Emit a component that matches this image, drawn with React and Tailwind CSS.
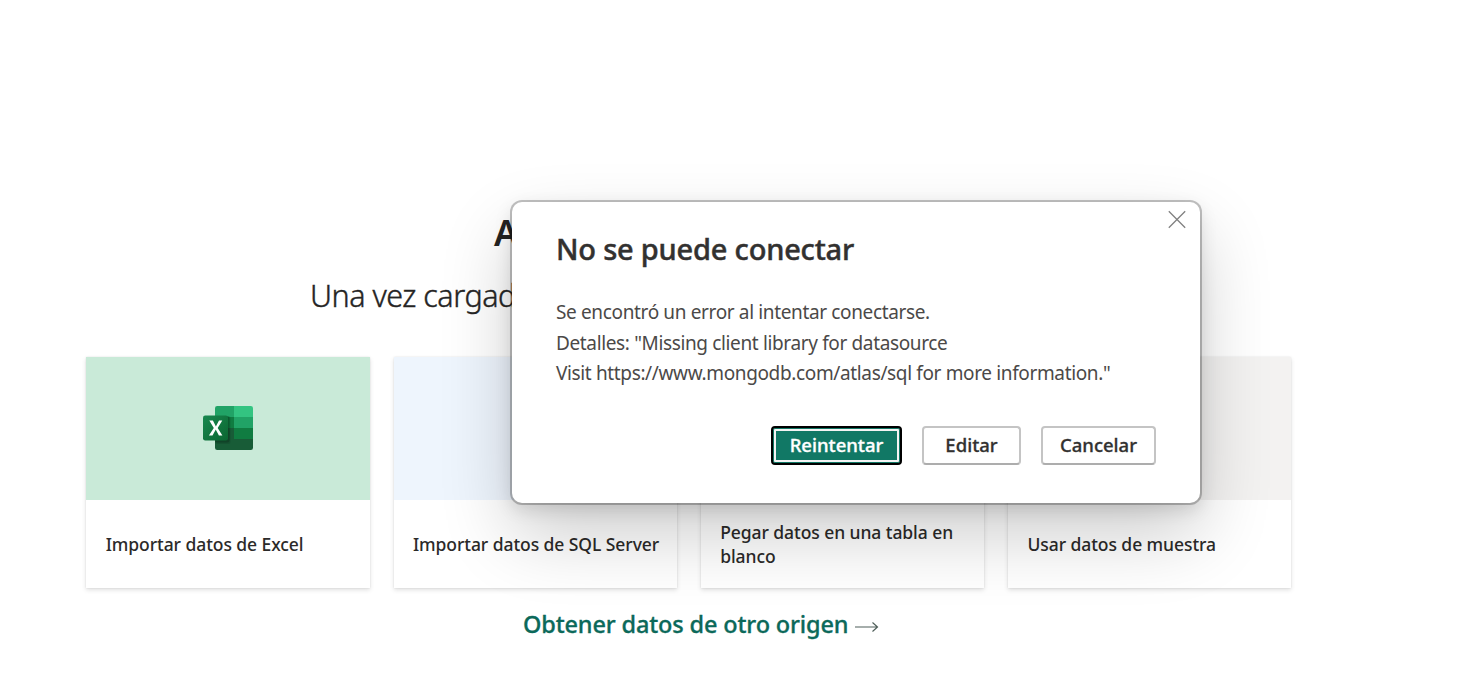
import React from "react";

function ExcelLogo() {
  return (
    <svg width="50" height="44" viewBox="0 0 50 44" className="mt-[-1px]">
      <defs>
        <clipPath id="book">
          <rect x="12" y="0" width="38" height="44" rx="2.2" />
        </clipPath>
        <linearGradient id="tile" x1="0" y1="0" x2="1" y2="1">
          <stop offset="0" stopColor="#18884f" />
          <stop offset="1" stopColor="#0b6631" />
        </linearGradient>
      </defs>
      <g clipPath="url(#book)">
        <rect x="12" y="0" width="19" height="11" fill="#21a366" />
        <rect x="31" y="0" width="19" height="11" fill="#33c481" />
        <rect x="12" y="11" width="19" height="11" fill="#107c41" />
        <rect x="31" y="11" width="19" height="11" fill="#21a366" />
        <rect x="12" y="22" width="19" height="11" fill="#185c37" />
        <rect x="31" y="22" width="19" height="11" fill="#107c41" />
        <rect x="12" y="33" width="38" height="11" fill="#185c37" />
        <rect x="12" y="10" width="14.5" height="26.5" rx="2" fill="#000" opacity=".18" />
        <rect x="12" y="10" width="15.5" height="28" rx="2" fill="#000" opacity=".1" />
      </g>
      <rect x="0" y="9.5" width="25" height="25" rx="2.2" fill="url(#tile)" />
      <path
        d="M5.9 29.5 10.8 22 6.3 14.6h3.6l2.5 4.8.5 1.1.5-1.1 2.6-4.8h3.3L14.7 22l4.7 7.5h-3.5l-2.8-5.2-.4-.8-.3.8-2.9 5.2z"
        fill="#fff"
      />
    </svg>
  );
}

const cards = [
  { label: "Importar datos de Excel", tone: "bg-[#c9ead8]", icon: <ExcelLogo /> },
  { label: "Importar datos de SQL Server", tone: "bg-[#eef5fd]" },
  { label: "Pegar datos en una tabla en blanco", tone: "bg-[#f3f2f1]" },
  { label: "Usar datos de muestra", tone: "bg-[#f3f2f1]" },
];

function Card({ label, tone, icon }) {
  return (
    <div className="flex h-[231px] flex-col bg-white shadow-[0_2px_4.5px_rgba(0,0,0,0.13),0_0.4px_1.2px_rgba(0,0,0,0.11)]">
      <div className={`flex h-[143px] items-center justify-center ${tone}`}>{icon}</div>
      <div className="flex flex-1 items-center pr-4 pl-[19.3px] text-[17.5px] leading-6 font-medium tracking-[-0.07px] text-[#2b2a29]">
        <span>{label}</span>
      </div>
    </div>
  );
}

function Dialog() {
  return (
    <div
      role="dialog"
      className="absolute top-[202px] left-[512px] h-[301px] w-[688px] rounded-[10px] bg-white px-[44px] shadow-[0_0_0_2px_rgba(0,0,0,0.23),0_6px_18px_rgba(0,0,0,0.13),0_32px_72px_rgba(0,0,0,0.2)]"
    >
      <button aria-label="Cerrar" className="absolute top-[8px] right-[14px]">
        <svg width="18" height="19" viewBox="0 0 18 19" stroke="#808080" strokeWidth="1.3" fill="none">
          <path d="M.8 1.300 17.2 17.7M17.2 1.300.8 17.7" />
        </svg>
      </button>
      <h2 className="pt-[27px] text-[29px] leading-[40px] font-medium tracking-[-0.2px] text-[#323130] [-webkit-text-stroke:0.45px_#323130]">
        <span>No se puede conectar</span>
      </h2>
      <div className="mt-[28px] text-[19px] leading-[30.5px] tracking-[-0.36px] whitespace-nowrap text-[#4b4948]">
        <p><span>Se encontró un error al intentar conectarse.</span></p>
        <p><span>Detalles: "Missing client library for datasource</span></p>
        <p><span>Visit https://www.mongodb.com/atlas/sql for more information."</span></p>
      </div>
      <div className="mt-[37.5px] flex justify-end gap-5 text-[18.5px] font-medium text-[#323130]">
        <button className="flex h-[39px] w-[131px] items-center justify-center rounded-[4px] border-2 border-black bg-[#117865] pb-[2px] text-white shadow-[inset_0_0_0_1px_#117865,inset_0_0_0_3px_#f4f4f4] [-webkit-text-stroke:0.35px_#fff]">
          Reintentar
        </button>
        <button className="flex h-[39px] w-[99px] items-center justify-center rounded-[4px] border-2 border-[#c4c4c4] border-b-[#adadad] pb-[2px] [-webkit-text-stroke:0.3px_#323130]">
          Editar
        </button>
        <button className="flex h-[39px] w-[115px] items-center justify-center rounded-[4px] border-2 border-[#c4c4c4] border-b-[#adadad] pb-[2px] [-webkit-text-stroke:0.3px_#323130]">
          Cancelar
        </button>
      </div>
    </div>
  );
}

export default function App() {
  return (
    <div className="relative h-[700px] w-[1458px] overflow-hidden bg-white font-['Noto_Sans','Open_Sans',sans-serif]">
      <main className="w-[1291.4px] pt-[208px] pl-[86.4px]">
        <h1 className="pl-[407.6px] text-[36px] leading-[50px] font-semibold text-[#252423]">A</h1>
        <p className="mt-[17px] pl-[223.6px] text-[30.5px] leading-[40px] font-light tracking-[-0.5px] text-[#252423] [-webkit-text-stroke:0.4px_#252423]">
          <span>Una vez cargad</span>
        </p>
        <div className="mt-[42px] grid grid-cols-4 gap-[24px]">
          {cards.map((c) => (
            <Card key={c.label} {...c} />
          ))}
        </div>
        <a className="mt-[18px] flex items-center pl-[436.6px] text-[23.5px] leading-[36px] font-medium tracking-[-0.15px] text-[#0c695a] [-webkit-text-stroke:0.3px_#0c695a]">
          <span>Obtener datos de otro origen</span>
          <svg width="24" height="12" viewBox="0 0 24 12" className="mt-[5px] ml-[7px]" fill="none" stroke="#4f5f5a" strokeWidth="1.2">
            <path d="M0 6h22.5M17.5 1.500 22.5 6l-5 4.500" />
          </svg>
        </a>
      </main>
      <Dialog />
    </div>
  );
}
